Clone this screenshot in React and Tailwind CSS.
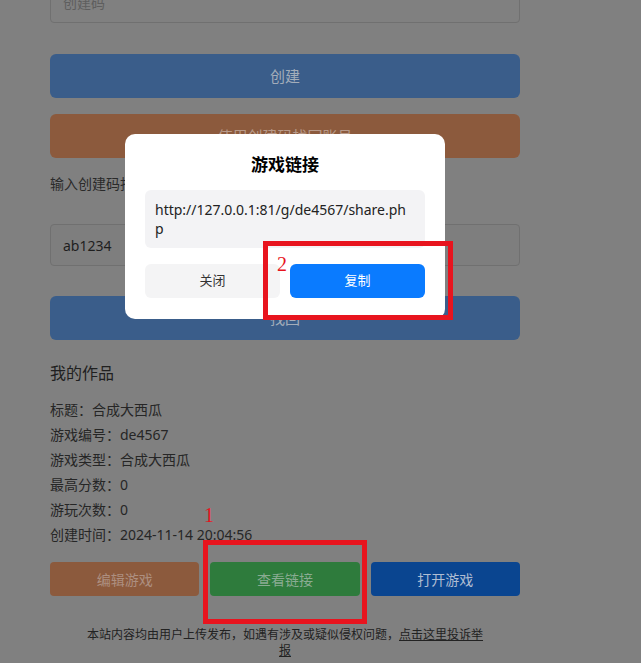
export default function App() {
  const cjk = { fontFamily: '"Noto Sans", "Noto Sans CJK SC", sans-serif' };
  return (
    <div className="relative w-[641px] h-[663px] overflow-hidden bg-[#808080]" style={cjk}>
      <div className="ml-[50px] w-[470px] flex flex-col">
        <div className="-mt-[19px] h-[42px] rounded-[4px] border border-[#707070] bg-[#808080] px-[12px] flex items-center text-[14px] text-[#5e5e5e]">
          创建码
        </div>
        <div className="mt-[31px] h-[44px] rounded-[6px] bg-[#3a5d8a] flex items-center justify-center text-[15px] text-[#a3adba]">
          创建
        </div>
        <div className="mt-[16px] h-[44px] rounded-[6px] bg-[#8c5a3d] flex items-center justify-center text-[15px] text-[#b89a8a]">
          使用创建码找回账号
        </div>
        <div className="mt-[16px] h-[20px] leading-[20px] text-[14px] text-[#2a2a2a]">输入创建码找回账号</div>
        <div className="mt-[30px] h-[42px] rounded-[4px] border border-[#707070] bg-[#7e7e7e] px-[12px] flex items-center text-[14px] text-[#1e1e1e]">
          ab1234
        </div>
        <div className="mt-[30px] h-[44px] rounded-[6px] bg-[#3a5d8a] flex items-center justify-center text-[15px] text-[#a3adba]">
          找回
        </div>
        <div className="mt-[21px] h-[24px] leading-[24px] text-[16px] text-[#202020]">我的作品</div>
        <div className="mt-[12px] flex flex-col text-[14px] leading-[25px] text-[#262626]">
          <div>标题：合成大西瓜</div>
          <div>游戏编号：de4567</div>
          <div>游戏类型：合成大西瓜</div>
          <div>最高分数：0</div>
          <div>游玩次数：0</div>
          <div>创建时间：2024-11-14 20:04:56</div>
        </div>
        <div className="mt-[15px] grid grid-cols-3 gap-[11px]">
          <div className="h-[34px] rounded-[4px] bg-[#8c5a3d] flex items-center justify-center text-[14px] text-[#ad8f80]">编辑游戏</div>
          <div className="h-[34px] rounded-[4px] bg-[#2e7b3c] flex items-center justify-center text-[14px] text-[#8aab92]">查看链接</div>
          <div className="h-[34px] rounded-[4px] bg-[#0a4590] flex items-center justify-center text-[14px] text-[#b0bdd2]">打开游戏</div>
        </div>
        <div className="mt-[31px] mx-auto w-[400px] text-center text-[12px] leading-[16px] text-[#222]">
          本站内容均由用户上传发布，如遇有涉及或疑似侵权问题，<span className="underline">点击这里投诉举报</span>
        </div>
      </div>

      {/* modal */}
      <div className="absolute left-[125px] top-[134px] w-[320px] rounded-[10px] bg-white px-[20px] pt-[19px] pb-[21px] flex flex-col">
        <div className="h-[24px] leading-[24px] text-center text-[17px] font-bold text-black">游戏链接</div>
        <div className="mt-[13px] rounded-[6px] bg-[#f3f3f5] pl-[10px] pr-[14px] py-[10px] text-[14px] leading-[19px] text-[#222] break-all">
          http://127.0.0.1:81/g/de4567/share.php
        </div>
        <div className="mt-[16px] grid grid-cols-2 gap-[10px]">
          <div className="h-[34px] rounded-[6px] bg-[#f4f4f5] flex items-center justify-center text-[13px] text-[#333]">关闭</div>
          <div className="h-[34px] rounded-[6px] bg-[#0a7bff] flex items-center justify-center text-[13px] text-white">复制</div>
        </div>
      </div>

      {/* annotations */}
      <div className="absolute left-[263px] top-[241px] w-[190px] h-[79px] border-[5px] border-[#e8141e]" />
      <div className="absolute left-[277px] top-[252px] text-[20px] leading-[24px] text-[#e8141e]" style={{ fontFamily: '"Liberation Serif", serif' }}>2</div>
      <div className="absolute left-[203px] top-[540px] w-[164px] h-[84px] border-[5px] border-[#e8141e]" />
      <div className="absolute left-[204px] top-[503px] text-[20px] leading-[24px] text-[#e8141e]" style={{ fontFamily: '"Liberation Serif", serif' }}>1</div>
    </div>
  );
}
